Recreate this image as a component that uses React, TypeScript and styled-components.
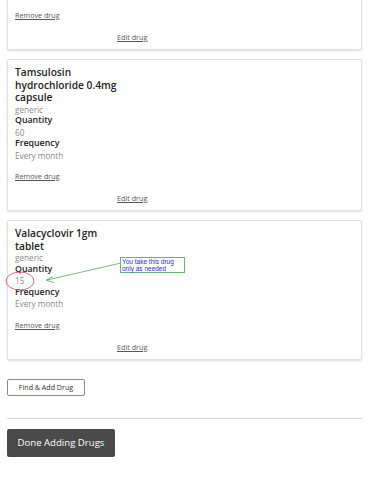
import React from 'react';
import styled, { createGlobalStyle } from 'styled-components';

type Drug = {
  name: string;
  kind: string;
  quantity: string;
  frequency: string;
  note?: boolean;
};

const drugs: Drug[] = [
  { name: 'Tamsulosin hydrochloride 0.4mg capsule', kind: 'generic', quantity: '60', frequency: 'Every month' },
  { name: 'Valacyclovir 1gm tablet', kind: 'generic', quantity: '15', frequency: 'Every month', note: true },
];

const GlobalStyle = createGlobalStyle`
  body {
    margin: 0;
    background: #fff;
    font-family: 'Open Sans', 'Noto Sans', sans-serif;
    color: #222;
  }
`;

const CardLinks: React.FC = () => (
  <>
    <RemoveLink>Remove drug</RemoveLink>
    <EditLink>Edit drug</EditLink>
  </>
);

const App: React.FC = () => {
  return (
    <Page>
      <GlobalStyle />
      <CardList>
        {/* previous drug, scrolled mostly out of view */}
        <DrugCard>
          <CardLinks />
        </DrugCard>
        {drugs.map((d) => (
          <DrugCard key={d.name}>
            <Title>{d.name}</Title>
            <Value>{d.kind}</Value>
            <Label>Quantity</Label>
            <Value>{d.quantity}</Value>
            <Label>Frequency</Label>
            <Value>{d.frequency}</Value>
            <CardLinks />
            {d.note && (
              <>
                <Markup width="200" height="80" viewBox="0 0 200 80">
                  <ellipse cx="12" cy="60" rx="14" ry="9" fill="none" stroke="#d0454f" strokeWidth="0.8" />
                  <line x1="113" y1="42" x2="39" y2="59" stroke="#55a860" strokeWidth="0.8" />
                  <polyline points="45,55.5 38,59.2 46,61.5" fill="none" stroke="#55a860" strokeWidth="0.8" />
                </Markup>
                <NoteBox>
                  You take this drug
                  <br />
                  only as needed
                </NoteBox>
              </>
            )}
          </DrugCard>
        ))}
      </CardList>
      <FindButton>Find &amp; Add Drug</FindButton>
      <Divider />
      <DoneButton>Done Adding Drugs</DoneButton>
    </Page>
  );
};

const Page = styled.div`
  width: 370px;
  height: 480px;
  overflow: hidden;
  padding: 0 8px 0 7px;
  box-sizing: border-box;
`;

const CardList = styled.div`
  display: flex;
  flex-direction: column;
  gap: 9px;
  margin-top: -7px;
`;

const DrugCard = styled.div`
  position: relative;
  display: flex;
  flex-direction: column;
  align-items: flex-start;
  padding: 6px 7px 6px;
  border: 1px solid #e2e2e2;
  border-radius: 2px;
  box-shadow: 0 1px 2px rgba(0, 0, 0, 0.14);
  background: #fff;
`;

const Title = styled.div`
  width: 108px;
  font-size: 10.2px;
  line-height: 12.5px;
  font-weight: 600;
  color: #222;
`;

const Label = styled.div`
  font-size: 8.8px;
  line-height: 11.5px;
  font-weight: 600;
  color: #222;
`;

const Value = styled.div`
  font-size: 8.2px;
  line-height: 11.5px;
  color: #8a8a8a;
`;

const RemoveLink = styled.a`
  margin-top: 9px;
  font-size: 7.2px;
  line-height: 12px;
  color: #555;
  text-decoration: underline;
  cursor: pointer;
`;

const EditLink = styled.a`
  margin: 10px 0 0 102px;
  font-size: 7.2px;
  line-height: 12px;
  color: #555;
  text-decoration: underline;
  cursor: pointer;
`;

const Markup = styled.svg`
  position: absolute;
  left: 0;
  top: 0;
  pointer-events: none;
  overflow: visible;
`;

const NoteBox = styled.div`
  position: absolute;
  left: 112px;
  top: 36px;
  width: 65px;
  height: 16px;
  box-sizing: border-box;
  padding: 0 1px;
  border: 1px solid #6bb070;
  background: #fff;
  font-family: 'Liberation Sans', Arial, sans-serif;
  font-size: 6.5px;
  line-height: 7px;
  color: #2a2ad0;
`;

const FindButton = styled.button`
  display: block;
  margin-top: 19px;
  width: 78px;
  height: 17px;
  padding: 0;
  border: 1px solid #8a8a8a;
  border-radius: 2px;
  background: #fff;
  font-family: 'Open Sans', sans-serif;
  font-size: 7.1px;
  color: #333;
`;

const Divider = styled.hr`
  margin: 22px 0 10px;
  border: none;
  border-top: 1px solid #d8d8d8;
`;

const DoneButton = styled.button`
  display: block;
  width: 108px;
  height: 28px;
  padding: 0;
  border: none;
  border-radius: 2px;
  background: #4a4a4a;
  font-family: 'Open Sans', sans-serif;
  font-size: 9.6px;
  color: #fff;
`;

export default App;
